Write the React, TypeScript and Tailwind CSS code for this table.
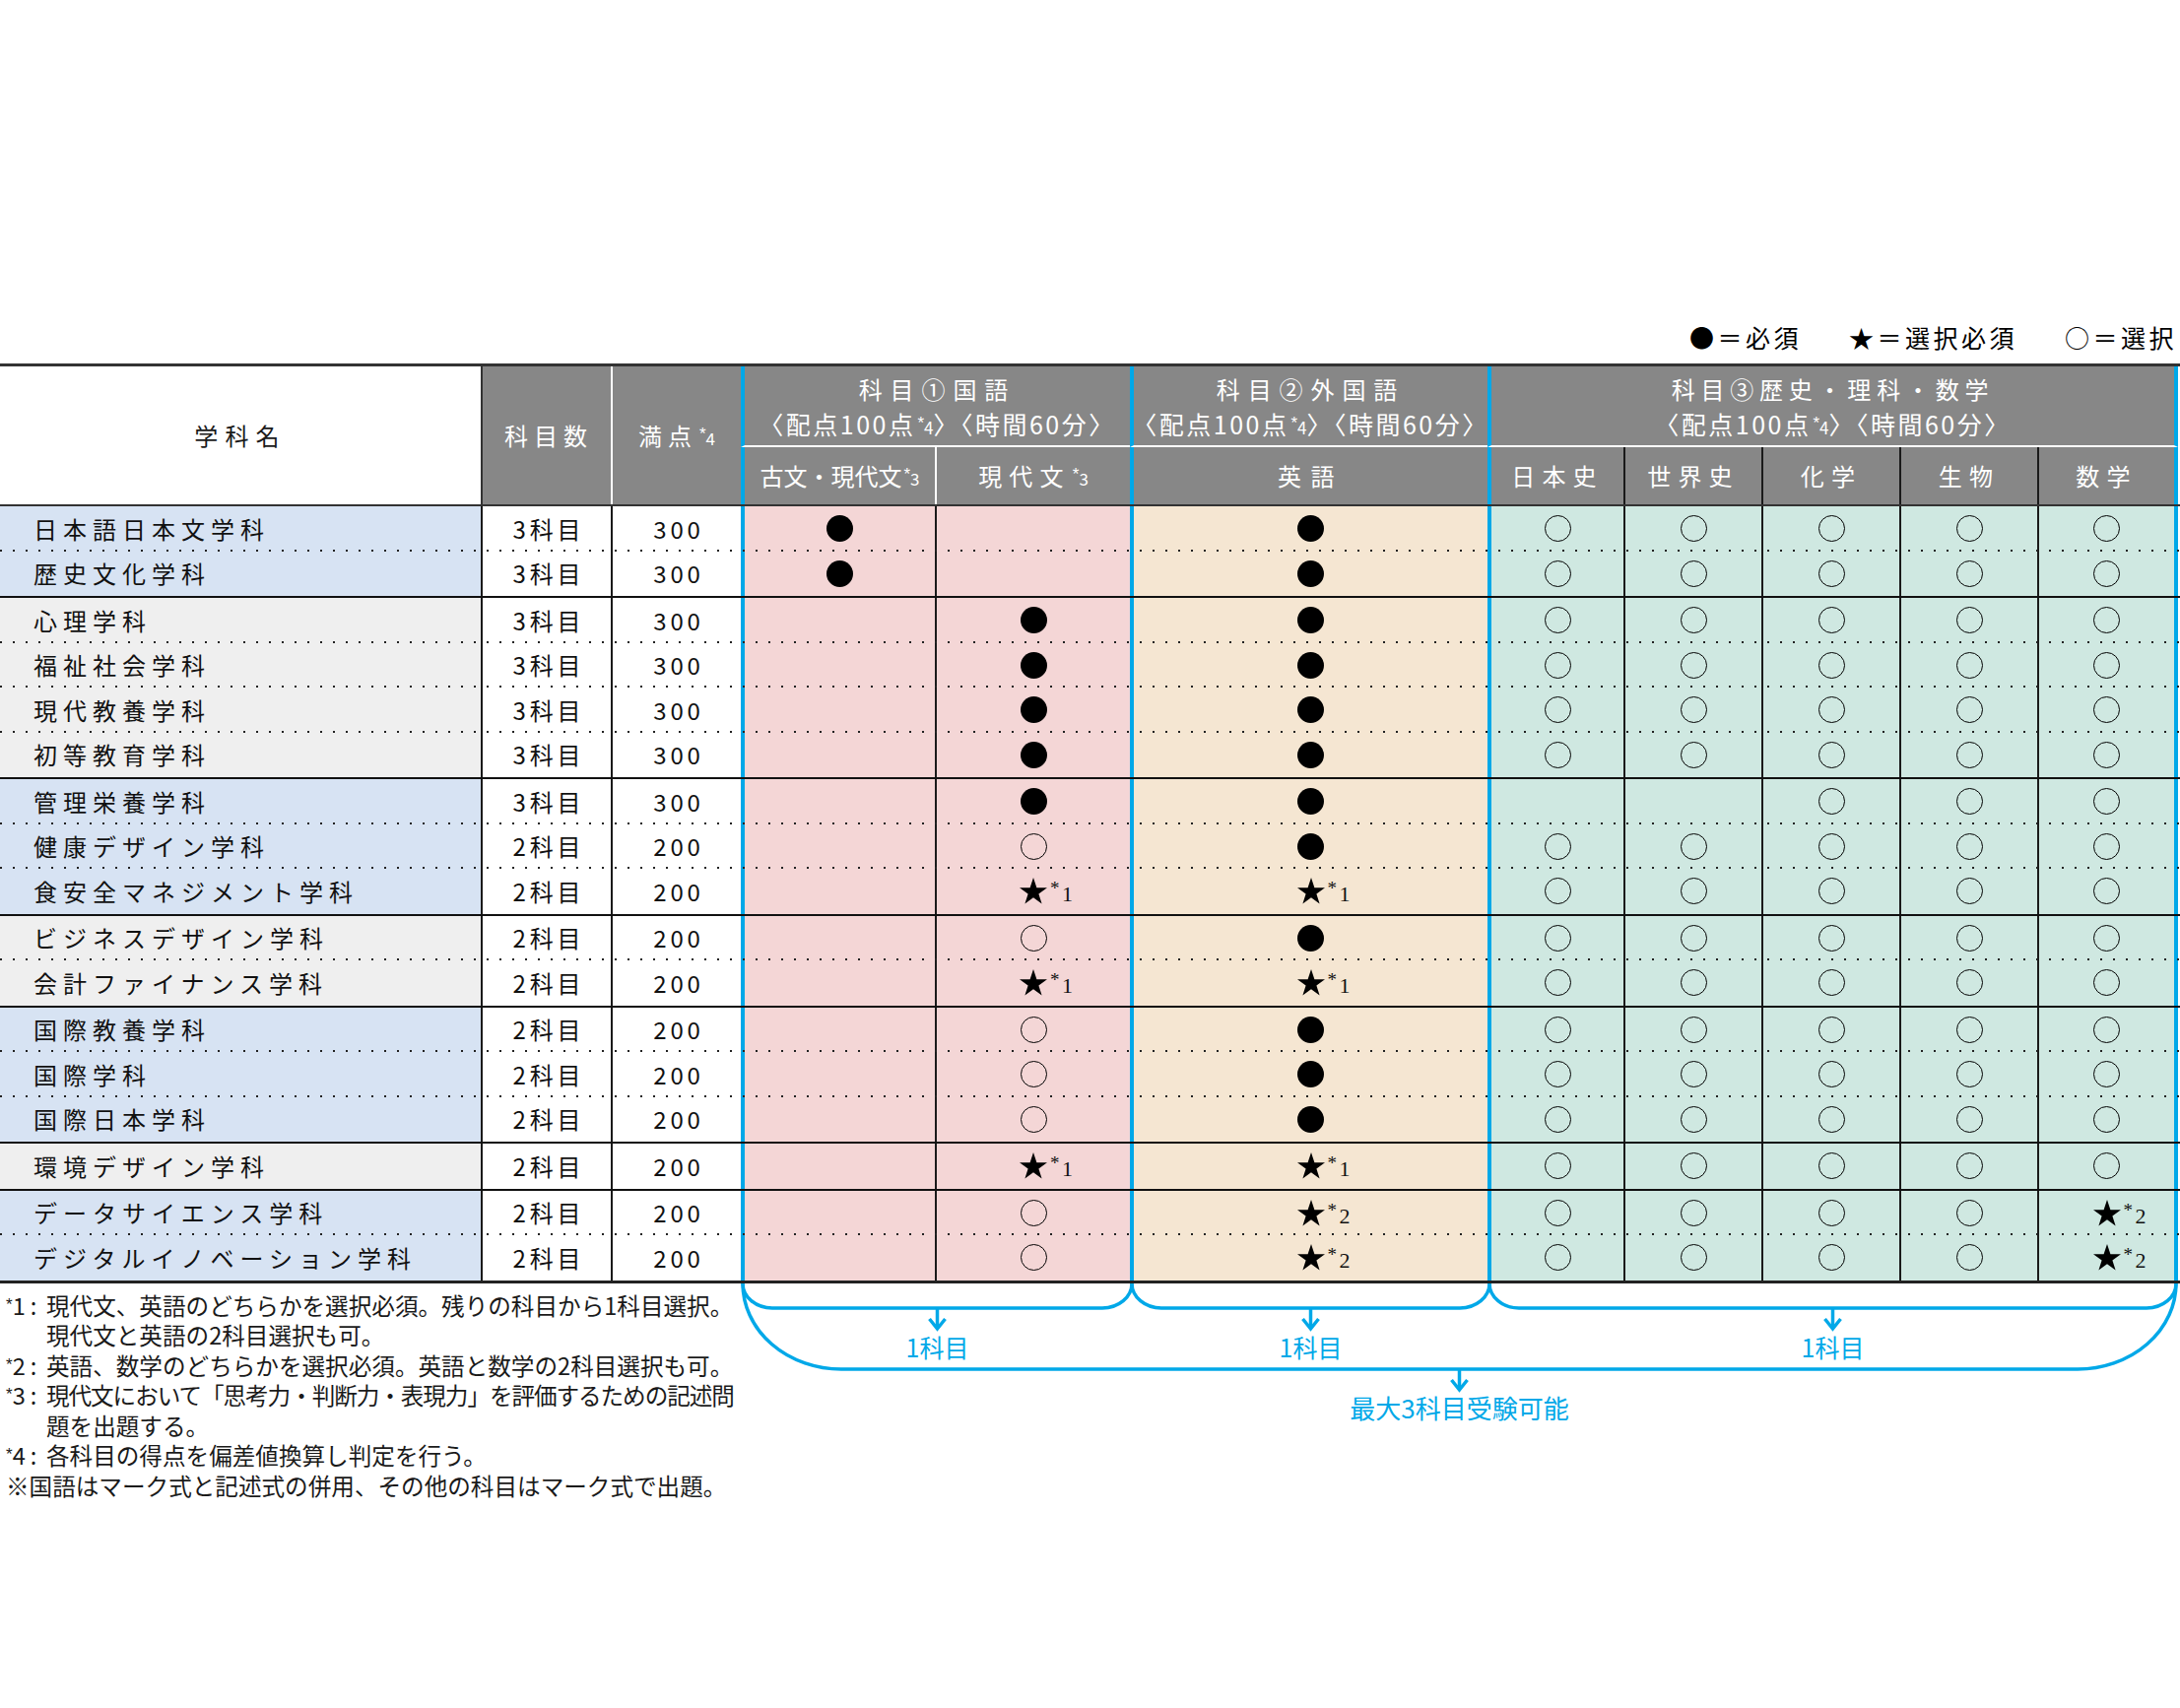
import React from "react";

type Mark = "" | "F" | "O" | "S1" | "S2";

type Row = { name: string; count: string; total: string; marks: Mark[] };

const O5: Mark[] = ["O", "O", "O", "O", "O"];

const GROUPS: { tone: "blue" | "gray"; rows: Row[] }[] = [
  {
    tone: "blue",
    rows: [
      { name: "日本語日本文学科", count: "3科目", total: "300", marks: ["F", "", "F", ...O5] },
      { name: "歴史文化学科", count: "3科目", total: "300", marks: ["F", "", "F", ...O5] },
    ],
  },
  {
    tone: "gray",
    rows: [
      { name: "心理学科", count: "3科目", total: "300", marks: ["", "F", "F", ...O5] },
      { name: "福祉社会学科", count: "3科目", total: "300", marks: ["", "F", "F", ...O5] },
      { name: "現代教養学科", count: "3科目", total: "300", marks: ["", "F", "F", ...O5] },
      { name: "初等教育学科", count: "3科目", total: "300", marks: ["", "F", "F", ...O5] },
    ],
  },
  {
    tone: "blue",
    rows: [
      { name: "管理栄養学科", count: "3科目", total: "300", marks: ["", "F", "F", "", "", "O", "O", "O"] },
      { name: "健康デザイン学科", count: "2科目", total: "200", marks: ["", "O", "F", ...O5] },
      { name: "食安全マネジメント学科", count: "2科目", total: "200", marks: ["", "S1", "S1", ...O5] },
    ],
  },
  {
    tone: "gray",
    rows: [
      { name: "ビジネスデザイン学科", count: "2科目", total: "200", marks: ["", "O", "F", ...O5] },
      { name: "会計ファイナンス学科", count: "2科目", total: "200", marks: ["", "S1", "S1", ...O5] },
    ],
  },
  {
    tone: "blue",
    rows: [
      { name: "国際教養学科", count: "2科目", total: "200", marks: ["", "O", "F", ...O5] },
      { name: "国際学科", count: "2科目", total: "200", marks: ["", "O", "F", ...O5] },
      { name: "国際日本学科", count: "2科目", total: "200", marks: ["", "O", "F", ...O5] },
    ],
  },
  {
    tone: "gray",
    rows: [{ name: "環境デザイン学科", count: "2科目", total: "200", marks: ["", "S1", "S1", ...O5] }],
  },
  {
    tone: "blue",
    rows: [
      { name: "データサイエンス学科", count: "2科目", total: "200", marks: ["", "O", "S2", "O", "O", "O", "O", "S2"] },
      { name: "デジタルイノベーション学科", count: "2科目", total: "200", marks: ["", "O", "S2", "O", "O", "O", "O", "S2"] },
    ],
  },
];

const COLS =
  "grid grid-cols-[490px_132px_130px_199px_196px_363px_140px_140px_140px_140px_141px]";

// background + divider for each of the 8 subject columns
const MARK_CELL = [
  "bg-[#f4d6d6] border-l-4 border-r-2 border-l-[#00a8e8] border-r-[#1a1a1a]",
  "bg-[#f4d6d6]",
  "bg-[#f5e6d2] border-l-4 border-l-[#00a8e8]",
  "bg-[#cfe8e1] border-l-4 border-r-2 border-l-[#00a8e8] border-r-[#1a1a1a]",
  "bg-[#cfe8e1] border-r-2 border-r-[#1a1a1a]",
  "bg-[#cfe8e1] border-r-2 border-r-[#1a1a1a]",
  "bg-[#cfe8e1] border-r-2 border-r-[#1a1a1a]",
  "bg-[#cfe8e1] border-r-4 border-r-[#00a8e8]",
];

function Note({ n }: { n: string }) {
  return (
    <span className="tracking-normal">
      <span className="ml-[2px] align-[6px] font-['Liberation_Sans',sans-serif] text-[17px]">*</span>
      <span className="text-[17px]">{n}</span>
    </span>
  );
}

function Star() {
  return (
    <svg viewBox="0 0 28 27" className="h-[27px] w-[28px]">
      <polygon
        points="14,0 17.4,10.2 28,10.2 19.4,16.5 22.6,26.6 14,20.3 5.4,26.6 8.6,16.5 0,10.2 10.6,10.2"
        fill="#000"
      />
    </svg>
  );
}

function MarkIcon({ m }: { m: Mark }) {
  if (m === "F") return <span className="block h-[27px] w-[27px] rounded-full bg-black" />;
  if (m === "O") return <span className="block h-[27px] w-[27px] rounded-full border-[1.5px] border-black" />;
  if (m === "S1" || m === "S2")
    return (
      <span className="relative block h-[27px] w-[28px]">
        <Star />
        <span className="absolute left-[31px] top-[1px] font-['Liberation_Serif',serif] text-[19px] leading-none">*</span>
        <span className="absolute left-[43px] top-[6px] font-['Liberation_Serif',serif] text-[22px] leading-none">
          {m === "S1" ? "1" : "2"}
        </span>
      </span>
    );
  return null;
}

function Points() {
  return (
    <span className="whitespace-nowrap text-[25px] leading-[35px] tracking-[0.1em]">
      〈配点100点<Note n="4" />〉〈時間60分〉
    </span>
  );
}

function Header() {
  return (
    <div className={`${COLS} grid-rows-[82px_58px] border-t-[3px] border-b-2 border-[#333] text-[24px] leading-none`}>
      <div className="row-span-2 flex items-center justify-center border-r-2 border-r-[#333] bg-white tracking-[0.3em] text-[#1a1a1a]">
        学科名
      </div>
      <div className="row-span-2 flex items-center justify-center border-r-2 border-r-white bg-[#878787] pl-[4px] tracking-[0.25em] text-white">
        科目数
      </div>
      <div className="row-span-2 flex items-center justify-center bg-[#878787] tracking-[0.25em] text-white">
        満点<Note n="4" />
      </div>
      <div className="col-span-2 flex flex-col items-center justify-center border-b-2 border-l-4 border-b-white border-l-[#00a8e8] bg-[#878787] pt-[4px] text-white">
        <span className="leading-[35px] tracking-[0.33em]">科目①国語</span>
        <Points />
      </div>
      <div className="flex flex-col items-center justify-center border-b-2 border-l-4 border-b-white border-l-[#00a8e8] bg-[#878787] pt-[4px] text-white">
        <span className="leading-[35px] tracking-[0.33em]">科目②外国語</span>
        <Points />
      </div>
      <div className="col-span-5 flex flex-col items-center justify-center border-b-2 border-l-4 border-r-4 border-b-white border-l-[#00a8e8] border-r-[#00a8e8] bg-[#878787] pt-[4px] text-white">
        <span className="leading-[35px] tracking-[0.24em]">科目③歴史・理科・数学</span>
        <Points />
      </div>
      <div className="flex items-center justify-center border-l-4 border-r-2 border-l-[#00a8e8] border-r-white bg-[#878787] text-white">
        古文・現代文<Note n="3" />
      </div>
      <div className="flex items-center justify-center bg-[#878787] tracking-[0.3em] text-white">
        現代文<Note n="3" />
      </div>
      <div className="flex items-center justify-center border-l-4 border-l-[#00a8e8] bg-[#878787] tracking-[0.4em] text-white">
        英語
      </div>
      {["日本史", "世界史", "化学", "生物"].map((s, i) => (
        <div
          key={s}
          className={`flex items-center justify-center border-r-2 border-r-[#1a1a1a] bg-[#878787] tracking-[0.3em] text-white ${
            i === 0 ? "border-l-4 border-l-[#00a8e8]" : ""
          }`}
        >
          {s}
        </div>
      ))}
      <div className="flex items-center justify-center border-r-4 border-r-[#00a8e8] bg-[#878787] tracking-[0.3em] text-white">
        数学
      </div>
    </div>
  );
}

function Body() {
  return (
    <div className="text-[24px] leading-none text-[#111]">
      {GROUPS.map((g, gi) => (
        <div key={gi} className={gi === GROUPS.length - 1 ? "border-b-[3px] border-[#222]" : "border-b-2 border-[#111]"}>
          {g.rows.map((r, ri) => (
            <div
              key={r.name}
              className={`${COLS} relative h-[45.5px] ${
                ri < g.rows.length - 1
                  ? "after:absolute after:inset-x-0 after:bottom-0 after:h-[2px] after:bg-[image:repeating-linear-gradient(90deg,#222_0_2px,transparent_2px_13px)] after:content-['']"
                  : ""
              }`}
            >
              <div
                className={`flex items-center border-r-2 border-r-[#1a1a1a] pl-[34px] tracking-[0.25em] ${
                  g.tone === "blue" ? "bg-[#d7e3f3]" : "bg-[#efefef]"
                }`}
              >
                {r.name}
              </div>
              <div className="flex items-center justify-center border-r-2 border-r-[#1a1a1a] bg-white pl-[4px] tracking-[0.16em]">
                {r.count}
              </div>
              <div className="flex items-center justify-center bg-white pl-[4px] tracking-[0.16em]">{r.total}</div>
              {r.marks.map((m, mi) => (
                <div key={mi} className={`flex items-center justify-center ${MARK_CELL[mi]}`}>
                  <MarkIcon m={m} />
                </div>
              ))}
            </div>
          ))}
        </div>
      ))}
    </div>
  );
}

function Label({ n }: { n: string }) {
  return (
    <span className="w-[41px] shrink-0">
      <span className="align-[5px] font-['Liberation_Sans',sans-serif] text-[17px]">*</span>
      {n}
      <span className="ml-[5px]">:</span>
    </span>
  );
}

function Footnotes() {
  return (
    <div className="w-[752px] shrink-0 whitespace-nowrap pl-[6px] pt-[7px] text-[23.6px] leading-[30.5px] text-[#1a1a1a]">
      <div className="flex">
        <Label n="1" />
        <span>
          現代文、英語のどちらかを選択必須。残りの科目から1科目選択。
          <br />
          現代文と英語の2科目選択も可。
        </span>
      </div>
      <div className="flex">
        <Label n="2" />
        <span>英語、数学のどちらかを選択必須。英語と数学の2科目選択も可。</span>
      </div>
      <div className="flex">
        <Label n="3" />
        <span>
          <span className="tracking-[-0.045em]">現代文において「思考力・判断力・表現力」を評価するための記述問</span>
          <br />
          題を出題する。
        </span>
      </div>
      <div className="flex">
        <Label n="4" />
        <span>各科目の得点を偏差値換算し判定を行う。</span>
      </div>
      <div>※国語はマーク式と記述式の併用、その他の科目はマーク式で出題。</div>
    </div>
  );
}

function Brackets() {
  const c = "#00a8e8";
  const small = (a: number, b: number) => `M ${a} 0 A 30 25 0 0 0 ${a + 30} 25 L ${b - 30} 25 A 30 25 0 0 0 ${b} 0`;
  const arrow = (x: number, y: number) => (
    <g key={x}>
      <path d={`M ${x} ${y} L ${x} ${y + 20}`} />
      <path d={`M ${x - 8} ${y + 11} L ${x} ${y + 21} L ${x + 8} ${y + 11}`} />
    </g>
  );
  return (
    <div className="relative h-[160px] w-[1461px]">
      <svg className="absolute inset-0 overflow-visible" width="1461" height="160" fill="none" stroke={c} strokeWidth="3.5">
        <path d={small(2, 397)} />
        <path d={small(397, 760)} />
        <path d={small(760, 1457)} />
        <path d="M 2 0 A 100 87 0 0 0 102 87 L 1357 87 A 100 87 0 0 0 1457 0" />
        {arrow(199.5, 25)}
        {arrow(578.5, 25)}
        {arrow(1108.5, 25)}
        {arrow(729.5, 87)}
      </svg>
      <div className="relative grid grid-cols-[395px_363px_697px] pl-[2px] pt-[49px] text-[25px] leading-[30px] text-[#00a8e8]">
        <span className="text-center">1科目</span>
        <span className="text-center">1科目</span>
        <span className="text-center">1科目</span>
      </div>
      <div className="relative mt-[31px] w-[1457px] pl-[2px] text-center text-[26px] leading-[32px] text-[#00a8e8]">
        最大3科目受験可能
      </div>
    </div>
  );
}

export default function App() {
  return (
    <div className="h-[1734px] w-[2213px] bg-white pt-[325px] font-['Noto_Sans_CJK_JP',sans-serif]">
      <div className="mb-[8px] flex h-[36px] items-center justify-end gap-[48px] pr-[3px] text-[25px] tracking-[0.14em] text-black">
        <span>●＝必須</span>
        <span>★＝選択必須</span>
        <span>○＝選択</span>
      </div>
      <Header />
      <Body />
      <div className="flex">
        <Footnotes />
        <Brackets />
      </div>
    </div>
  );
}
